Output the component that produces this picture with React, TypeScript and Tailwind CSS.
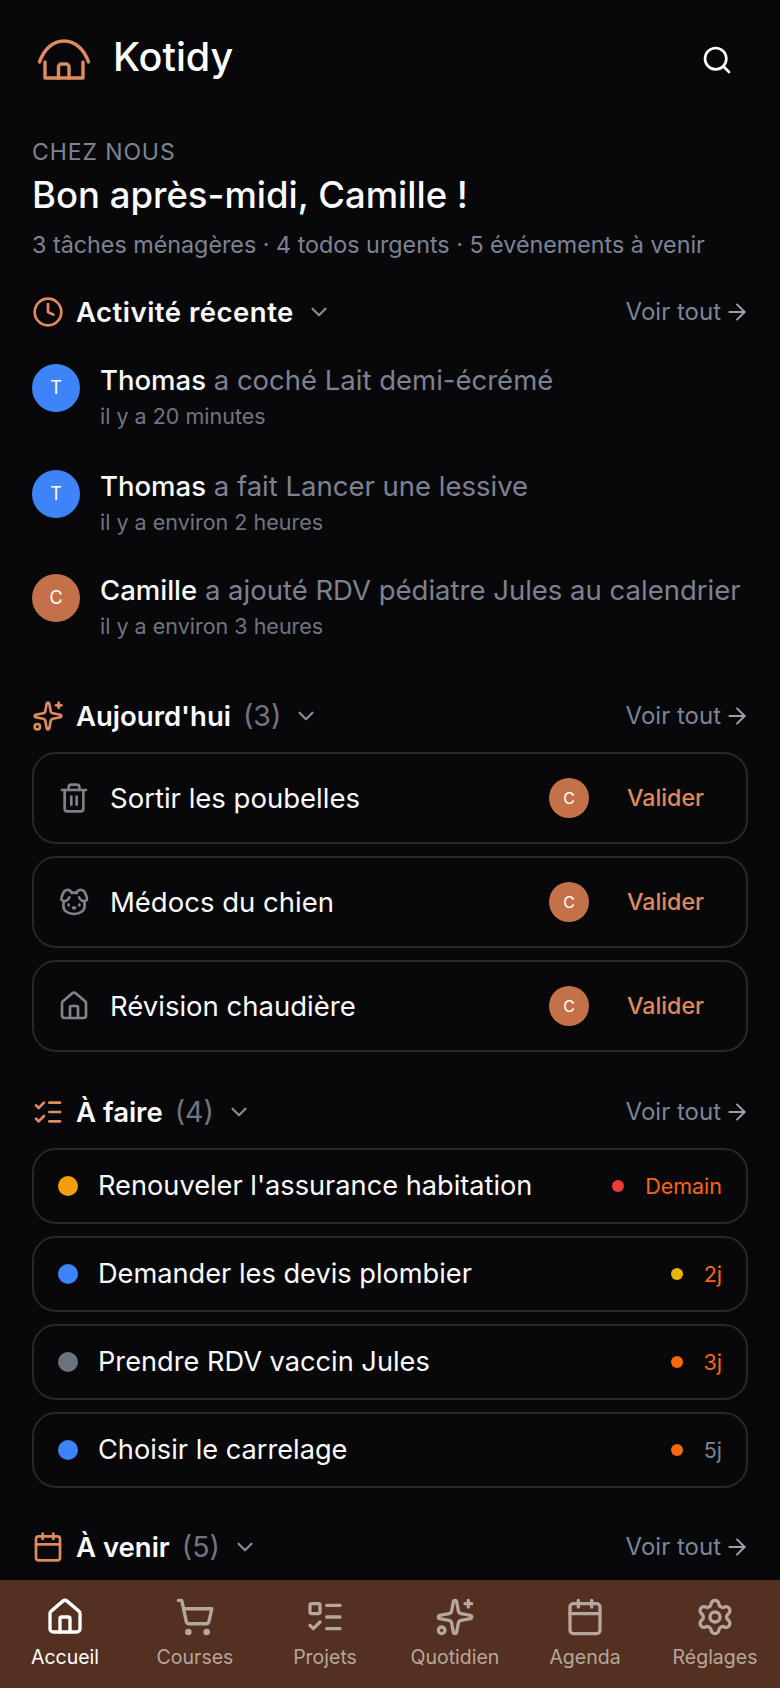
import { ArrowRight, Calendar, ChevronDown, Clock, Dog, House, ListChecks, ListTodo, Search, Settings, ShoppingCart, Sparkles, Trash2 } from "lucide-react";
import type { ReactNode } from "react";

function SectionHeader({ icon, title, count }: { icon: ReactNode; title: ReactNode; count?: number }) {
  return (
    <div className="flex h-10 items-center justify-between">
      <div className="flex items-center">
        <span className="flex w-[44px] text-[#e08a5f]">{icon}</span>
        <h2 className="text-[27.5px] font-semibold text-[#fafafa]">{title}</h2>
        {count !== undefined && <span className="ml-3 text-[28.5px] text-[#71757f]">({count})</span>}
        <ChevronDown className="ml-3 size-[26px] text-[#8a8d96]" strokeWidth={2} />
      </div>
      <div className="flex items-center gap-[3px] text-[24px] text-[#7c8494]">
        Voir tout
        <ArrowRight className="-mr-[2px] size-[26px] text-[#a0a3aa]" strokeWidth={1.8} />
      </div>
    </div>
  );
}

function Activity({ initial, color, name, text, time, className }: { initial: string; color: string; name: string; text: string; time: string; className?: string }) {
  return (
    <div className={`flex items-start gap-[20px] ${className ?? ""}`}>
      <div className={`flex size-12 shrink-0 items-center justify-center rounded-full text-lg text-white ${color}`}>{initial}</div>
      <div>
        <p className="text-[27.5px] leading-8 text-[#7e8290]">
          <span className="font-medium text-[#fafafa]">{name}</span> {text}
        </p>
        <p className="mt-[6px] text-[21.5px] leading-7 text-[#71757f]">{time}</p>
      </div>
    </div>
  );
}

function Chore({ icon, label }: { icon: ReactNode; label: string }) {
  return (
    <div className="flex h-[92px] items-center rounded-3xl border-2 border-[#26272b] pl-6 pr-[42px]">
      <span className="flex w-[52px] text-[#7f8288]">{icon}</span>
      <span className="flex-1 text-[27.5px] text-[#fafafa]">{label}</span>
      <div className="flex size-10 items-center justify-center rounded-full bg-[#c4714a] text-base text-white">C</div>
      <span className="ml-[38px] text-[23.2px] font-medium text-[#e08a5f]">Valider</span>
    </div>
  );
}

function Todo({ dot, label, flag, due, dueColor }: { dot: string; label: string; flag: string; due: string; dueColor: string }) {
  return (
    <div className="flex h-[76px] items-center rounded-3xl border-2 border-[#26272b] px-6">
      <span className={`size-5 rounded-full ${dot}`} />
      <span className="ml-[20px] flex-1 text-[27.2px] text-[#fafafa]">{label}</span>
      <span className={`size-3 rounded-full ${flag}`} />
      <span className={`ml-[21px] text-[21.5px] ${dueColor}`}>{due}</span>
    </div>
  );
}

function NavItem({ icon, label, active }: { icon: ReactNode; label: string; active?: boolean }) {
  return (
    <div className={`flex flex-col items-center gap-2 ${active ? "text-white" : "text-[#b5a79e]"}`}>
      {icon}
      <span className="text-[19.5px] leading-6">{label}</span>
    </div>
  );
}

export default function App() {
  return (
    <div className="flex h-[1688px] w-[780px] flex-col overflow-hidden bg-[#08080b] font-['Inter',sans-serif]">
      <main className="flex-1 overflow-hidden px-8">
        <header className="flex h-[120px] items-center justify-between">
          <div className="flex items-center gap-[21px]">
            <svg width="56" height="44" viewBox="0 0 56 44" fill="none" stroke="#e08a5f" strokeWidth="3.4" strokeLinecap="round" strokeLinejoin="round" className="ml-1">
              <path d="M3.5 24 C8 11 17 3 28 3 C39 3 48 11 52.5 24" />
              <path d="M9 24 V40 H47 V24" />
              <path d="M22.5 40 V29 a3 3 0 0 1 3-3 h4.5 a3 3 0 0 1 3 3 V40" />
            </svg>
            <span className="-mt-1 text-[39.5px] font-medium text-white">Kotidy</span>
          </div>
          <Search className="mr-[15px] size-8 text-white" strokeWidth={2} />
        </header>
        <p className="mt-[15px] text-[23px] uppercase tracking-[0.9px] text-[#7c8494]">Chez nous</p>
        <h1 className="-mt-[2px] text-[36.5px] font-medium text-[#fafafa]">Bon après-midi, Camille !</h1>
        <p className="mt-[6px] text-[23.3px] text-[#7c8494]">3 tâches ménagères · 4 todos urgents · 5 événements à venir</p>

        <section className="mt-[29px]">
          <SectionHeader icon={<Clock className="size-8" strokeWidth={2} />} title={<span className="tracking-[0.5px]">Activité récente</span>} />
          <div className="mt-[32px] flex flex-col gap-[38px]">
            <Activity initial="T" color="bg-[#3f83f8]" name="Thomas" text="a coché Lait demi-écrémé" time="il y a 20 minutes" />
            <Activity className="mt-[2px]" initial="T" color="bg-[#3f83f8]" name="Thomas" text="a fait Lancer une lessive" time="il y a environ 2 heures" />
            <Activity initial="C" color="bg-[#c4714a]" name="Camille" text="a ajouté RDV pédiatre Jules au calendrier" time="il y a environ 3 heures" />
          </div>
        </section>

        <section className="mt-[56px]">
          <SectionHeader icon={<Sparkles className="size-8" strokeWidth={2} />} title="Aujourd'hui" count={3} />
          <div className="mt-4 flex flex-col gap-3">
            <Chore icon={<Trash2 className="size-8" />} label="Sortir les poubelles" />
            <Chore icon={<Dog className="size-8" />} label="Médocs du chien" />
            <Chore icon={<House className="size-8" />} label="Révision chaudière" />
          </div>
        </section>

        <section className="mt-[40px]">
          <SectionHeader icon={<ListChecks className="size-8" strokeWidth={2} />} title="À faire" count={4} />
          <div className="mt-4 flex flex-col gap-3">
            <Todo dot="bg-[#f59e0b]" label="Renouveler l'assurance habitation" flag="bg-[#ef3a3a]" due="Demain" dueColor="text-[#f9640f]" />
            <Todo dot="bg-[#3f83f8]" label="Demander les devis plombier" flag="bg-[#eab308]" due="2j" dueColor="text-[#f9640f]" />
            <Todo dot="bg-[#6b7280]" label="Prendre RDV vaccin Jules" flag="bg-[#f96a06]" due="3j" dueColor="text-[#f9640f]" />
            <Todo dot="bg-[#3f83f8]" label="Choisir le carrelage" flag="bg-[#f96a06]" due="5j" dueColor="text-[#7c8494]" />
          </div>
        </section>

        <section className="mt-[39px]">
          <SectionHeader icon={<Calendar className="size-8" strokeWidth={2} />} title="À venir" count={5} />
        </section>
      </main>
      <nav className="grid h-[108px] shrink-0 grid-cols-6 bg-[#543020] pt-[17px]">
        <NavItem active icon={<House className="size-10" />} label="Accueil" />
        <NavItem icon={<ShoppingCart className="size-10" />} label="Courses" />
        <NavItem icon={<ListTodo className="size-10" />} label="Projets" />
        <NavItem icon={<Sparkles className="size-10" />} label="Quotidien" />
        <NavItem icon={<Calendar className="size-10" />} label="Agenda" />
        <NavItem icon={<Settings className="size-10" />} label="Réglages" />
      </nav>
    </div>
  );
}
